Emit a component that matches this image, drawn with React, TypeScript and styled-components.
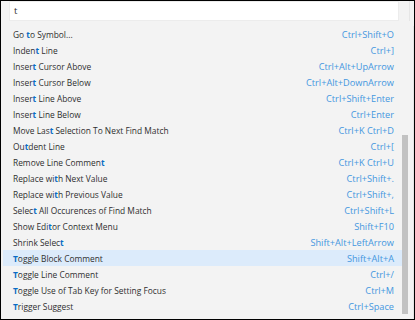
import React from "react";
import styled, { createGlobalStyle } from "styled-components";

interface Command {
  label: string;
  hit: number;
  keys: string;
}

const commands: Command[] = [
  { label: "Go to Symbol...", hit: 3, keys: "Ctrl+Shift+O" },
  { label: "Indent Line", hit: 5, keys: "Ctrl+]" },
  { label: "Insert Cursor Above", hit: 5, keys: "Ctrl+Alt+UpArrow" },
  { label: "Insert Cursor Below", hit: 5, keys: "Ctrl+Alt+DownArrow" },
  { label: "Insert Line Above", hit: 5, keys: "Ctrl+Shift+Enter" },
  { label: "Insert Line Below", hit: 5, keys: "Ctrl+Enter" },
  { label: "Move Last Selection To Next Find Match", hit: 8, keys: "Ctrl+K Ctrl+D" },
  { label: "Outdent Line", hit: 2, keys: "Ctrl+[" },
  { label: "Remove Line Comment", hit: 18, keys: "Ctrl+K Ctrl+U" },
  { label: "Replace with Next Value", hit: 10, keys: "Ctrl+Shift+." },
  { label: "Replace with Previous Value", hit: 10, keys: "Ctrl+Shift+," },
  { label: "Select All Occurences of Find Match", hit: 5, keys: "Ctrl+Shift+L" },
  { label: "Show Editor Context Menu", hit: 8, keys: "Shift+F10" },
  { label: "Shrink Select", hit: 12, keys: "Shift+Alt+LeftArrow" },
  { label: "Toggle Block Comment", hit: 0, keys: "Shift+Alt+A" },
  { label: "Toggle Line Comment", hit: 0, keys: "Ctrl+/" },
  { label: "Toggle Use of Tab Key for Setting Focus", hit: 0, keys: "Ctrl+M" },
  { label: "Trigger Suggest", hit: 0, keys: "Ctrl+Space" },
];

const GlobalStyle = createGlobalStyle`
  html, body {
    margin: 0;
    padding: 0;
    background: #ffffff;
  }
  * {
    box-sizing: border-box;
  }
`;

export default function App() {
  return (
    <>
      <GlobalStyle />
      <SFrame>
        <SInputRow>
          <SInput>t</SInput>
        </SInputRow>
        <SBody>
          <SList>
            {commands.map((c, i) => (
              <SRow key={i} selected={i === 14}>
                <SLabel>
                  {c.label.slice(0, c.hit)}
                  <SHit>{c.label[c.hit]}</SHit>
                  {c.label.slice(c.hit + 1)}
                </SLabel>
                <SKeys>{c.keys}</SKeys>
              </SRow>
            ))}
          </SList>
          <STrack>
            <SThumb />
          </STrack>
          <SEdge />
        </SBody>
      </SFrame>
    </>
  );
}

const SFrame = styled.div`
  width: 415px;
  height: 320px;
  border: 1px solid #000000;
  background: #f3f3f3;
  display: flex;
  flex-direction: column;
  font-family: "Open Sans", "Noto Sans", sans-serif;
  overflow: hidden;
`;

const SInputRow = styled.div`
  display: flex;
  padding: 0 10px 0 8px;
  border-right: 1px solid #e6e6e6;
  margin-right: 4px;
`;

const SInput = styled.div`
  flex: 1;
  height: 20px;
  background: #ffffff;
  border: 1px solid #ececec;
  font-size: 9.5px;
  line-height: 18px;
  padding-left: 4px;
  color: #2e2e2e;
`;

const SBody = styled.div`
  flex: 1;
  display: flex;
  flex-direction: row;
  padding-top: 5px;
  padding-left: 2px;
`;

const SList = styled.div`
  flex: 1;
  display: flex;
  flex-direction: column;
`;

const SRow = styled.div<{ selected: boolean }>`
  height: 16px;
  display: flex;
  align-items: center;
  justify-content: space-between;
  padding: 0 8px 0 10px;
  background: ${({ selected }) => (selected ? "#dcebfb" : "transparent")};
  font-size: 8.4px;
  white-space: nowrap;
`;

const SLabel = styled.span`
  color: #2f2f2f;
`;

const SHit = styled.span`
  color: #0a6cc4;
  font-weight: 700;
`;

const SKeys = styled.span`
  color: #4497e0;
  font-size: 9.2px;
`;

const STrack = styled.div`
  width: 6px;
  display: flex;
  flex-direction: column;
  padding-top: 109px;
  padding-bottom: 5px;
`;

const SThumb = styled.div`
  flex: 1;
  background: #c2c2c2;
`;

const SEdge = styled.div`
  width: 6px;
  border-right: 1px solid #e4e4e4;
`;
